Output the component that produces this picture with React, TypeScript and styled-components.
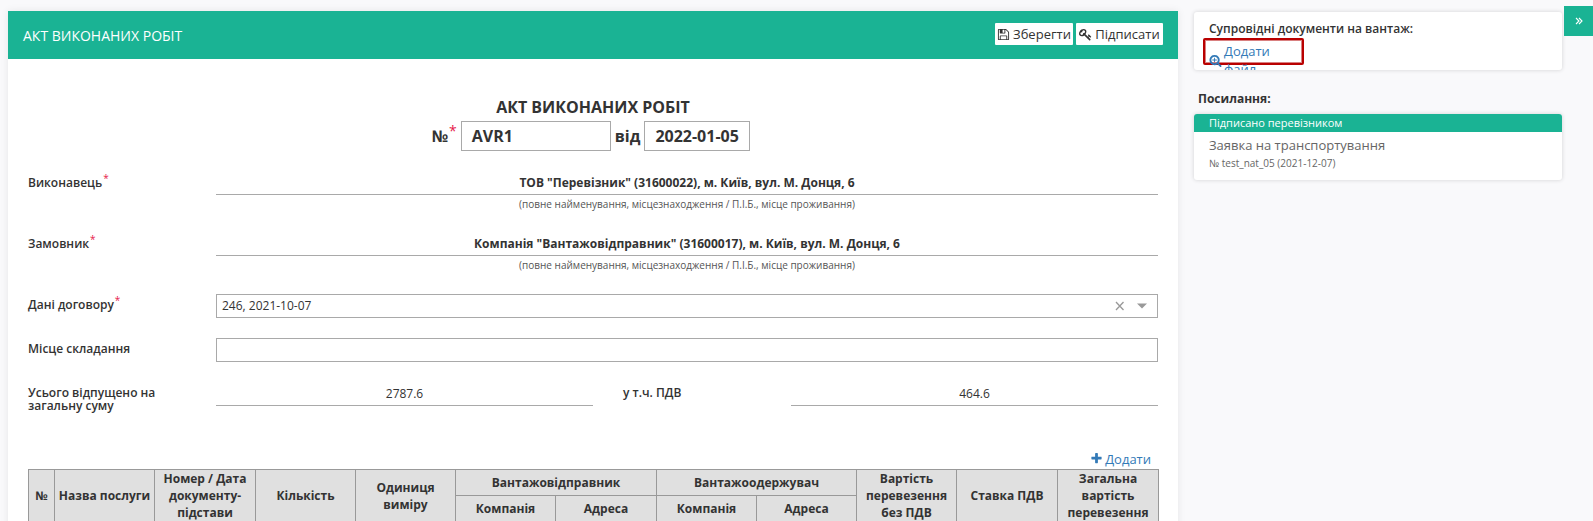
import React from "react";
import styled, { createGlobalStyle } from "styled-components";

const green = "#1ab394";
const line = "#a9a9a9";

const GlobalStyle = createGlobalStyle`
  * { box-sizing: border-box; }
  body {
    margin: 0;
    background: #f9f9fb;
    color: #333;
    font-family: "Open Sans", "Noto Sans", sans-serif;
    font-size: 13px;
    line-height: 18px;
    overflow: hidden;
  }
`;

const Page = styled.div`
  display: flex;
  align-items: flex-start;
  height: 521px;
  padding-left: 8px;
  overflow: hidden;
`;

const Panel = styled.main`
  width: 1170px;
  height: 540px;
  margin-top: 11px;
  flex: none;
  background: #fff;
  box-shadow: 0 0 8px rgba(0, 0, 0, 0.08);
`;

const PanelHeader = styled.header`
  display: flex;
  align-items: center;
  justify-content: space-between;
  height: 48px;
  padding: 0 15px;
  background: ${green};
`;

const PanelTitle = styled.h1`
  margin: 0;
  padding-top: 2px;
  color: #fff;
  font-size: 14px;
  font-weight: 400;
`;

const Actions = styled.div`
  display: flex;
  gap: 3px;
  margin-top: -2px;
`;

const ActionButton = styled.button<{ $width: number }>`
  display: flex;
  align-items: center;
  justify-content: center;
  gap: 3px;
  width: ${(p) => p.$width}px;
  height: 22px;
  padding: 0;
  border: 0;
  border-radius: 1px;
  background: #fff;
  color: #333;
  font: inherit;
`;

const Glyph = styled.svg<{ $size?: number }>`
  display: block;
  flex: none;
  width: ${(p) => p.$size ?? 13}px;
  height: ${(p) => p.$size ?? 13}px;
  fill: currentColor;
`;

const Form = styled.div`
  padding: 37px 20px 0;
`;

const DocTitle = styled.h2`
  margin: 0;
  font-size: 16px;
  font-weight: 700;
  line-height: 22px;
  text-align: center;
`;

const NumberRow = styled.div`
  display: flex;
  align-items: center;
  justify-content: center;
  height: 30px;
  margin-top: 3px;
  font-size: 16px;
  font-weight: 700;
`;

const HeadInput = styled.div<{ $width: number }>`
  width: ${(p) => p.$width}px;
  height: 30px;
  margin: 0 4px;
  padding-left: 10px;
  border: 1px solid ${line};
  line-height: 28px;
`;

const Star = styled.sup`
  align-self: flex-start;
  margin-left: 1px;
  color: #e6194b;
  font-size: 10px;
  font-weight: 400;
  line-height: 0;
  vertical-align: 5px;
`;

const BigStar = styled(Star)`
  padding-top: 10px;
  font-size: 14px;
`;

const Row = styled.div<{ $height: number }>`
  display: flex;
  height: ${(p) => p.$height}px;
`;

const Label = styled.div<{ $width?: number; $top?: number }>`
  flex: none;
  width: ${(p) => p.$width ?? 188}px;
  padding-top: ${(p) => p.$top ?? 4}px;
  font-size: 12px;
  font-weight: 600;
  line-height: 13px;
`;

const Party = styled.div`
  flex: 1;
  text-align: center;
`;

const PartyName = styled.div`
  height: 23px;
  border-bottom: 1px solid ${line};
  font-size: 12px;
  font-weight: 700;
  line-height: 22px;
`;

const Hint = styled.div`
  color: #555;
  font-size: 10px;
  line-height: 19px;
`;

const Field = styled.div`
  display: flex;
  align-items: center;
  flex: 1;
  height: 24px;
  padding: 0 9px 0 5px;
  border: 1px solid ${line};
  font-size: 12px;
`;

const FieldValue = styled.span`
  flex: 1;
`;

const Amount = styled.div<{ $width: number }>`
  width: ${(p) => p.$width}px;
  height: 24px;
  border-bottom: 1px solid ${line};
  font-size: 12px;
  line-height: 24px;
  text-align: center;
`;

const Link = styled.a`
  display: flex;
  align-items: center;
  gap: 2px;
  color: #337ab7;
`;

const AddLine = styled.div`
  display: flex;
  justify-content: flex-end;
  height: 21px;
  padding-right: 7px;
`;

const Table = styled.table`
  width: 1130px;
  border-collapse: collapse;
  table-layout: fixed;
  background: #e0e0e0;
`;

const Th = styled.th`
  height: 26px;
  padding: 0;
  border: 1px solid #999;
  font-size: 12px;
  font-weight: 700;
  line-height: 17px;
  text-align: center;
`;

const Side = styled.aside`
  width: 368px;
  margin: 12px 0 0 16px;
  flex: none;
`;

const Card = styled.section<{ $height: number }>`
  height: ${(p) => p.$height}px;
  border-radius: 3px;
  background: #fff;
  box-shadow: 0 0 4px rgba(0, 0, 0, 0.16);
  overflow: hidden;
`;

const CardTitle = styled.div`
  padding: 8px 15px 0;
  font-size: 12px;
  font-weight: 600;
`;

const Highlight = styled.div`
  width: 101px;
  height: 27px;
  margin: 0 0 0 9px;
  padding: 2px 0 0 4px;
  border: 2px solid #b90000;
  border-radius: 2px;
  box-shadow: inset 0 0 0 1px #d98080;
`;

const SideHeading = styled.div`
  padding: 20px 0 6px 4px;
  font-size: 12px;
  font-weight: 700;
`;

const Status = styled.div`
  height: 18px;
  padding-left: 15px;
  background: ${green};
  color: #fff;
  font-size: 11px;
  line-height: 18px;
`;

const DocName = styled.div`
  padding: 4px 15px 0;
  color: #666;
  font-size: 13px;
`;

const DocMeta = styled.div`
  padding-left: 15px;
  color: #666;
  font-size: 10px;
`;

const Toggle = styled.button`
  display: flex;
  align-items: center;
  justify-content: center;
  width: 29px;
  height: 30px;
  margin: 6px 0 0 2px;
  padding: 0;
  border: 0;
  background: ${green};
  color: #fff;
`;

const icons = {
  save: "M512 1536h768v-384h-768v384zm896 0h128v-896q0-14-10-38.5t-20-34.5l-281-281q-10-10-34-20t-39-10v416q0 40-28 68t-68 28h-576q-40 0-68-28t-28-68v-416h-128v1280h128v-416q0-40 28-68t68-28h832q40 0 68 28t28 68v416zm-384-928v-320q0-13-9.5-22.5t-22.5-9.5h-192q-13 0-22.5 9.5t-9.5 22.5v320q0 13 9.5 22.5t22.5 9.5h192q13 0 22.5-9.5t9.5-22.5zm640 32v928q0 40-28 68t-68 28h-1344q-40 0-68-28t-28-68v-1344q0-40 28-68t68-28h928q40 0 88 20t76 48l280 280q28 28 48 76t20 88z",
  key: "M832 512q0-80-56-136t-136-56-136 56-56 136q0 42 19 83-41-19-83-19-80 0-136 56t-56 136 56 136 136 56 136-56 56-136q0-42-19-83 41 19 83 19 80 0 136-56t56-136zm851 704q0 17-49 66t-66 49q-9 0-28.5-16t-36.5-33-38.5-40-24.5-26l-96 96 220 220q28 28 28 68 0 42-39 81t-81 39q-40 0-68-28l-671-671q-176 131-365 131-163 0-265.5-102.5t-102.5-265.5q0-160 95-313t248-248 313-95q163 0 265.5 102.5t102.5 265.5q0 189-131 365l355 355 96-96q-3-3-26-24.5t-40-38.5-33-36.5-16-28.5q0-17 49-66t66-49q13 0 23 10 6 6 46 44.5t82 79.5 86.5 86 73 78 28.5 41z",
  zoom: "M1088 800v64q0 13-9.5 22.5t-22.5 9.5h-224v224q0 13-9.5 22.5t-22.5 9.5h-64q-13 0-22.5-9.5t-9.5-22.5v-224h-224q-13 0-22.5-9.5t-9.5-22.5v-64q0-13 9.5-22.5t22.5-9.5h224v-224q0-13 9.5-22.5t22.5-9.5h64q13 0 22.5 9.5t9.5 22.5v224h224q13 0 22.5 9.5t9.5 22.5zm128 32q0-185-131.5-316.5t-316.5-131.5-316.5 131.5-131.5 316.5 131.5 316.5 316.5 131.5 316.5-131.5 131.5-316.5zm512 832q0 53-37.5 90.5t-90.5 37.5q-54 0-90-38l-343-342q-179 124-399 124-143 0-273.5-55.5t-225-150-150-225-55.5-273.5 55.5-273.5 150-225 225-150 273.5-55.5 273.5 55.5 225 150 150 225 55.5 273.5q0 220-124 399l343 343q37 37 37 90z",
  plus: "M1600 736v192q0 40-28 68t-68 28h-416v416q0 40-28 68t-68 28h-192q-40 0-68-28t-28-68v-416h-416q-40 0-68-28t-28-68v-192q0-40 28-68t68-28h416v-416q0-40 28-68t68-28h192q40 0 68 28t28 68v416h416q40 0 68 28t28 68z",
};

const Icon = ({ name }: { name: keyof typeof icons }) => (
  <Glyph viewBox="0 0 1792 1792">
    <path d={icons[name]} />
  </Glyph>
);

const FieldIcons = styled.svg`
  width: 34px;
  height: 12px;
`;

const parties = [
  { label: "Виконавець", value: 'ТОВ "Перевізник" (31600022), м. Київ, вул. М. Донця, 6' },
  { label: "Замовник", value: 'Компанія "Вантажовідправник" (31600017), м. Київ, вул. М. Донця, 6' },
];

const columns = [26, 100, 101, 100, 100, 100, 101, 100, 100, 100, 101, 101];

export default function App() {
  return (
    <Page>
      <GlobalStyle />
      <Panel>
        <PanelHeader>
          <PanelTitle>АКТ ВИКОНАНИХ РОБІТ</PanelTitle>
          <Actions>
            <ActionButton $width={78}><Icon name="save" />Зберегти</ActionButton>
            <ActionButton $width={87}><Icon name="key" />Підписати</ActionButton>
          </Actions>
        </PanelHeader>
        <Form>
          <DocTitle>АКТ ВИКОНАНИХ РОБІТ</DocTitle>
          <NumberRow>
            №<BigStar>*</BigStar>
            <HeadInput $width={150}>AVR1</HeadInput>
            від
            <HeadInput $width={106}>2022-01-05</HeadInput>
          </NumberRow>
          <Row $height={21} />
          {parties.map((p) => (
            <Row $height={61} key={p.label}>
              <Label>{p.label}<Star>*</Star></Label>
              <Party>
                <PartyName>{p.value}</PartyName>
                <Hint>(повне найменування, місцезнаходження / П.І.Б., місце проживання)</Hint>
              </Party>
            </Row>
          ))}
          <Row $height={44}>
            <Label>Дані договору<Star>*</Star></Label>
            <Field>
              <FieldValue>246, 2021-10-07</FieldValue>
              <FieldIcons viewBox="0 0 34 12">
                <path d="M2 2l7.500 8M9.500 2l-7.500 8" stroke="#999" strokeWidth="1.300" fill="none" />
                <path d="M23 3.500h10l-5 5z" fill="#999" />
              </FieldIcons>
            </Field>
          </Row>
          <Row $height={44}>
            <Label>Місце складання</Label>
            <Field />
          </Row>
          <Row $height={66}>
            <Label>Усього відпущено на<br />загальну суму</Label>
            <Amount $width={377}>2787.6</Amount>
            <Label $width={198}><AmountLabel>у т.ч. ПДВ</AmountLabel></Label>
            <Amount $width={367}>464.6</Amount>
          </Row>
          <AddLine><Link><Icon name="plus" />Додати</Link></AddLine>
          <Table>
            <colgroup>{columns.map((w, i) => <col key={i} width={w} />)}</colgroup>
            <thead>
              <tr>
                <Th rowSpan={2}>№</Th>
                <Th rowSpan={2}>Назва послуги</Th>
                <Th rowSpan={2}>Номер / Дата<br />документу-<br />підстави</Th>
                <Th rowSpan={2}>Кількість</Th>
                <Th rowSpan={2}>Одиниця<br />виміру</Th>
                <Th colSpan={2}>Вантажовідправник</Th>
                <Th colSpan={2}>Вантажоодержувач</Th>
                <Th rowSpan={2}>Вартість<br />перевезення<br />без ПДВ</Th>
                <Th rowSpan={2}>Ставка ПДВ</Th>
                <Th rowSpan={2}>Загальна<br />вартість<br />перевезення</Th>
              </tr>
              <tr>
                <Th>Компанія</Th>
                <Th>Адреса</Th>
                <Th>Компанія</Th>
                <Th>Адреса</Th>
              </tr>
            </thead>
          </Table>
        </Form>
      </Panel>
      <Side>
        <Card $height={58}>
          <CardTitle>Супровідні документи на вантаж:</CardTitle>
          <Highlight><Link><Icon name="zoom" />Додати файл</Link></Highlight>
        </Card>
        <SideHeading>Посилання:</SideHeading>
        <Card $height={66}>
          <Status>Підписано перевізником</Status>
          <DocName>Заявка на транспортування</DocName>
          <DocMeta>№ test_nat_05 (2021-12-07)</DocMeta>
        </Card>
      </Side>
      <Toggle aria-label="Згорнути">
        <Glyph viewBox="0 0 12 12" $size={12}>
          <path d="M3 3l3 3-3 3M6 3l3 3-3 3" fill="none" stroke="#fff" strokeWidth="1.100" />
        </Glyph>
      </Toggle>
    </Page>
  );
}

const AmountLabel = styled.div`
  padding-left: 30px;
`;
